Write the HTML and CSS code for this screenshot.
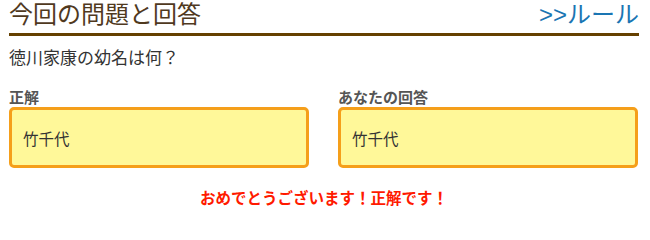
FILE: index.html
```html
<!DOCTYPE html>
<html lang="ja">
<head>
<meta charset="utf-8">
<link rel="stylesheet" href="styles.css">
</head>
<body>
<div class="page">
  <div class="header">
    <h1 class="title">今回の問題と回答</h1>
    <a class="rule-link" href="#">&gt;&gt;ルール</a>
  </div>
  <p class="question">徳川家康の幼名は何？</p>
  <div class="answers">
    <div class="answer">
      <div class="label">正解</div>
      <div class="box">竹千代</div>
    </div>
    <div class="answer">
      <div class="label">あなたの回答</div>
      <div class="box">竹千代</div>
    </div>
  </div>
  <p class="message">おめでとうございます！正解です！</p>
</div>
</body>
</html>
```
FILE: styles.css
```css
html, body {
  margin: 0;
  padding: 0;
  background: #fff;
}
body {
  font-family: "Liberation Sans", "Noto Sans CJK JP", sans-serif;
  color: #333;
}
.page {
  width: 630px;
  margin-left: 9px;
}
.header {
  display: flex;
  justify-content: space-between;
  align-items: flex-end;
  border-bottom: 3px solid #654000;
  padding-bottom: 3px;
}
.title {
  margin: 0;
  font-size: 24px;
  line-height: 30px;
  font-weight: normal;
  color: #50391e;
}
.rule-link {
  font-size: 24px;
  line-height: 30px;
  color: #1a75b3;
  text-decoration: none;
}
.question {
  margin: 11px 0 0;
  font-size: 17px;
  line-height: 24px;
  color: #333;
}
.answers {
  display: grid;
  grid-template-columns: 300px 300px;
  column-gap: 29px;
  margin-top: 17px;
}
.label {
  font-size: 15px;
  font-weight: bold;
  line-height: 19px;
  color: #555;
}
.box {
  box-sizing: border-box;
  height: 61px;
  border: 3px solid #f59f1a;
  border-radius: 5px;
  background: #fff899;
  padding-left: 11px;
  display: flex;
  align-items: center;
  font-size: 15.5px;
  color: #333;
}
.message {
  margin: 21px 0 0;
  text-align: center;
  font-size: 15.5px;
  font-weight: bold;
  line-height: 20px;
  color: #ff1a00;
}
```
